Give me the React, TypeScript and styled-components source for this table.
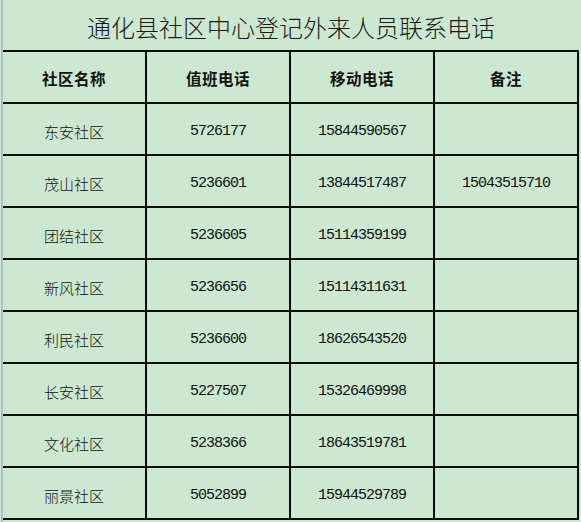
import React from "react";
import styled, { createGlobalStyle } from "styled-components";

const Global = createGlobalStyle`
  html, body { margin: 0; padding: 0; background: #cce8d0; }
  body { width: 581px; height: 522px; overflow: hidden; }
`;

const Page = styled.div`
  width: 581px;
  height: 522px;
  background: #cce8d0;
  display: flex;
  padding-left: 1px;
  box-sizing: border-box;
`;

const EdgeLine = styled.div`
  width: 2px;
  height: 522px;
  background: #aebccb;
  flex: none;
`;

const Sheet = styled.div`
  display: flex;
  flex-direction: column;
  width: 576px;
`;

const Title = styled.div`
  height: 50px;
  display: flex;
  align-items: center;
  justify-content: center;
  padding-top: 3px;
  box-sizing: border-box;
  font-family: "Noto Sans CJK SC", sans-serif;
  font-weight: 300;
  font-size: 24px;
  color: #1a1a1a;
`;

const Grid = styled.div`
  display: grid;
  grid-template-columns: repeat(4, 142px);
  grid-auto-rows: 50px;
  gap: 2px;
  padding: 2px 2px 2px 0;
  background: #0b0b0b;
  width: fit-content;
`;

const Cell = styled.div<{ $head?: boolean; $num?: boolean }>`
  background: #cce8d0;
  display: flex;
  align-items: center;
  justify-content: center;
  padding-top: ${(p) => (p.$head ? "2px" : "4px")};
  box-sizing: border-box;
  color: #111;
  font-family: ${(p) =>
    p.$num ? `"Liberation Mono", monospace` : `"Noto Sans CJK SC", sans-serif`};
  font-size: ${(p) => (p.$num ? "15px" : p.$head ? "15.5px" : "15px")};
  font-weight: ${(p) => (p.$head ? 700 : p.$num ? 400 : 300)};
  letter-spacing: ${(p) => (p.$head ? "0.5px" : p.$num ? "-1px" : "0")};
`;

const headers = ["社区名称", "值班电话", "移动电话", "备注"];

const rows: [string, string, string, string][] = [
  ["东安社区", "5726177", "15844590567", ""],
  ["茂山社区", "5236601", "13844517487", "15043515710"],
  ["团结社区", "5236605", "15114359199", ""],
  ["新风社区", "5236656", "15114311631", ""],
  ["利民社区", "5236600", "18626543520", ""],
  ["长安社区", "5227507", "15326469998", ""],
  ["文化社区", "5238366", "18643519781", ""],
  ["丽景社区", "5052899", "15944529789", ""],
];

export default function App() {
  return (
    <>
      <Global />
      <Page>
        <EdgeLine />
        <Sheet>
          <Title>通化县社区中心登记外来人员联系电话</Title>
          <Grid>
            {headers.map((h) => (
              <Cell key={h} $head>
                {h}
              </Cell>
            ))}
            {rows.map((r) =>
              r.map((v, i) => (
                <Cell key={r[0] + i} $num={i > 0}>
                  {v}
                </Cell>
              ))
            )}
          </Grid>
        </Sheet>
      </Page>
    </>
  );
}
